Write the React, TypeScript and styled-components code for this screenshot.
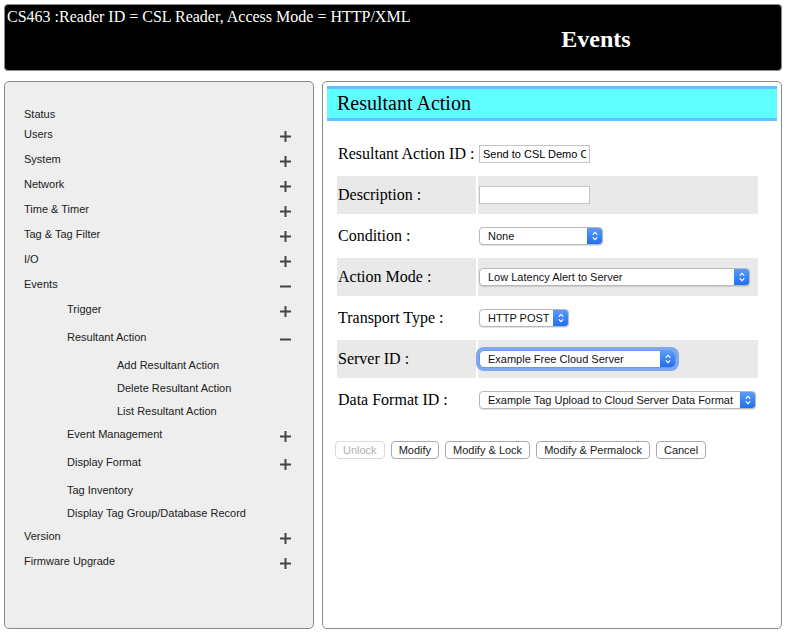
import React from "react";
import styled, { createGlobalStyle, css } from "styled-components";

const GlobalStyle = createGlobalStyle`
  html, body {
    margin: 0;
    padding: 0;
    background: #fff;
  }
  body {
    font-family: "Liberation Serif", "Times New Roman", serif;
  }
`;

const Page = styled.div`
  padding: 4px 3px 4px 4px;
  width: 785px;
  height: 636px;
  box-sizing: border-box;
  display: flex;
  flex-direction: column;
  gap: 10px;
`;

const Header = styled.header`
  height: 67px;
  box-sizing: border-box;
  background: #000;
  color: #fff;
  border: 1px solid #8a8a8a;
  border-radius: 4px;
  padding: 3px 2px 0;
`;

const ReaderInfo = styled.div`
  font-size: 16px;
`;

const PageTitle = styled.h1`
  margin: 0;
  font-size: 24px;
  font-weight: bold;
  text-align: center;
  padding-left: 406px;
`;

const Body = styled.div`
  flex: 1;
  display: flex;
  gap: 8px;
  margin-bottom: 3px;
`;

const Panel = styled.section<{ $grey?: boolean }>`
  box-sizing: border-box;
  border: 1px solid #8a8a8a;
  border-radius: 5px;
  background: ${(p) => (p.$grey ? "#eeeeee" : "#fff")};
`;

const MenuPanel = styled(Panel)`
  width: 310px;
  flex: none;
  padding: 26px 22px 0 19px;
`;

const ContentPanel = styled(Panel)`
  flex: 1;
  padding: 4px;
`;

const MenuList = styled.ul`
  list-style: none;
  margin: 0;
  padding: 0;
  font-family: "Liberation Sans", Arial, sans-serif;
  font-size: 11px;
  color: #222;
`;

const MenuRow = styled.li<{ $level: number; $gap: number }>`
  display: flex;
  justify-content: space-between;
  align-items: flex-start;
  height: 13px;
  line-height: 13px;
  margin-top: ${(p) => p.$gap}px;
  padding-left: ${(p) => (p.$level === 1 ? 0 : p.$level === 2 ? 43 : 93)}px;
`;

const Toggle = styled.svg`
  margin-top: 3px;
  flex: none;
`;

const ToggleIcon = ({ open }: { open: boolean }) => (
  <Toggle width="11" height="11" viewBox="0 0 11 11">
    <rect x="0" y="4.5" width="11" height="2" fill="#444" />
    {!open && <rect x="4.5" y="0" width="2" height="11" fill="#444" />}
  </Toggle>
);

const TitleBar = styled.h2`
  margin: 0;
  height: 35px;
  box-sizing: border-box;
  background: #5fffff;
  border-top: 3px solid #62c2ff;
  border-bottom: 3px solid #62c2ff;
  font-size: 20px;
  font-weight: normal;
  line-height: 29px;
  padding-left: 10px;
`;

const Form = styled.div`
  display: grid;
  grid-template-columns: 139px 280px;
  column-gap: 2px;
  row-gap: 3px;
  margin: 14px 0 0 10px;
`;

const Cell = styled.div<{ $shaded: boolean }>`
  height: 38px;
  display: flex;
  align-items: center;
  padding-left: 1px;
  font-size: 16px;
  background: ${(p) => (p.$shaded ? "#e9e9e9" : "transparent")};
`;

const TextInput = styled.input`
  width: 111px;
  height: 18px;
  box-sizing: border-box;
  border: 1px solid #c4c4c4;
  padding: 0 3px;
  font-family: "Liberation Sans", Arial, sans-serif;
  font-size: 11px;
  color: #000;
  background: #fff;
  outline: none;
`;

const SelectBox = styled.div<{ $w: number; $focus?: boolean }>`
  display: inline-flex;
  width: ${(p) => p.$w}px;
  height: 18px;
  box-sizing: border-box;
  border: 1px solid #b8b8b8;
  border-radius: 4px;
  background: #fff;
  font-family: "Liberation Sans", Arial, sans-serif;
  font-size: 11px;
  color: #111;
  overflow: hidden;
  ${(p) =>
    p.$focus
      ? css`
          box-shadow: 0 0 0 3px #7ea8ef;
          border-color: #6b97e6;
          border-radius: 5px;
        `
      : css`
          box-shadow: 0 1px 1px rgba(0, 0, 0, 0.12);
        `}
`;

const SelectText = styled.span`
  flex: 1;
  padding-left: 8px;
  line-height: 16px;
  white-space: nowrap;
  overflow: hidden;
`;

const Stepper = styled.span`
  width: 15px;
  flex: none;
  display: flex;
  align-items: center;
  justify-content: center;
  background: linear-gradient(#5a9cfb, #1f6ff0);
`;

const Select = ({ value, width, focus }: { value: string; width: number; focus?: boolean }) => (
  <SelectBox $w={width} $focus={focus}>
    <SelectText>{value}</SelectText>
    <Stepper>
      <svg width="8" height="12" viewBox="0 0 8 12">
        <path d="M1.8 4.6 L4 2.4 L6.2 4.6 M1.8 7.4 L4 9.6 L6.2 7.4" fill="none" stroke="#fff" strokeWidth="1.3" />
      </svg>
    </Stepper>
  </SelectBox>
);

const ButtonRow = styled.div`
  display: flex;
  gap: 6px;
  margin: 22px 0 0 8px;
`;

const Button = styled.button`
  height: 18px;
  box-sizing: border-box;
  padding: 0 7px;
  border: 1px solid #a9a9a9;
  border-radius: 4px;
  background: #fff;
  font-family: "Liberation Sans", Arial, sans-serif;
  font-size: 11px;
  color: #222;
  line-height: 16px;

  &:disabled {
    color: #b0b0b0;
    border-color: #dadada;
  }
`;

type MenuItem = { label: string; level: number; gap: number; toggle?: "open" | "closed" };

const menu: MenuItem[] = [
  { label: "Status", level: 1, gap: 0 },
  { label: "Users", level: 1, gap: 7, toggle: "closed" },
  { label: "System", level: 1, gap: 12, toggle: "closed" },
  { label: "Network", level: 1, gap: 12, toggle: "closed" },
  { label: "Time & Timer", level: 1, gap: 12, toggle: "closed" },
  { label: "Tag & Tag Filter", level: 1, gap: 12, toggle: "closed" },
  { label: "I/O", level: 1, gap: 12, toggle: "closed" },
  { label: "Events", level: 1, gap: 12, toggle: "open" },
  { label: "Trigger", level: 2, gap: 12, toggle: "closed" },
  { label: "Resultant Action", level: 2, gap: 15, toggle: "open" },
  { label: "Add Resultant Action", level: 3, gap: 15 },
  { label: "Delete Resultant Action", level: 3, gap: 10 },
  { label: "List Resultant Action", level: 3, gap: 10 },
  { label: "Event Management", level: 2, gap: 10, toggle: "closed" },
  { label: "Display Format", level: 2, gap: 15, toggle: "closed" },
  { label: "Tag Inventory", level: 2, gap: 15 },
  { label: "Display Tag Group/Database Record", level: 2, gap: 10 },
  { label: "Version", level: 1, gap: 10, toggle: "closed" },
  { label: "Firmware Upgrade", level: 1, gap: 12, toggle: "closed" },
];

const fields: { label: string; control: React.ReactNode }[] = [
  { label: "Resultant Action ID :", control: <TextInput readOnly value="Send to CSL Demo Cloud" /> },
  { label: "Description :", control: <TextInput readOnly value="" /> },
  { label: "Condition :", control: <Select value="None" width={124} /> },
  { label: "Action Mode :", control: <Select value="Low Latency Alert to Server" width={271} /> },
  { label: "Transport Type :", control: <Select value="HTTP POST" width={90} /> },
  { label: "Server ID :", control: <Select value="Example Free Cloud Server" width={197} focus /> },
  {
    label: "Data Format ID :",
    control: <Select value="Example Tag Upload to Cloud Server Data Format" width={277} />,
  },
];

export default function App() {
  return (
    <>
      <GlobalStyle />
      <Page>
        <Header>
          <ReaderInfo>CS463 :Reader ID = CSL Reader, Access Mode = HTTP/XML</ReaderInfo>
          <PageTitle>Events</PageTitle>
        </Header>
        <Body>
          <MenuPanel $grey>
            <MenuList>
              {menu.map((item) => (
                <MenuRow key={item.label} $level={item.level} $gap={item.gap}>
                  <span>{item.label}</span>
                  {item.toggle && <ToggleIcon open={item.toggle === "open"} />}
                </MenuRow>
              ))}
            </MenuList>
          </MenuPanel>
          <ContentPanel>
            <TitleBar>Resultant Action</TitleBar>
            <Form>
              {fields.map((f, i) => (
                <React.Fragment key={f.label}>
                  <Cell $shaded={i % 2 === 1}>{f.label}</Cell>
                  <Cell $shaded={i % 2 === 1}>{f.control}</Cell>
                </React.Fragment>
              ))}
            </Form>
            <ButtonRow>
              <Button disabled>Unlock</Button>
              <Button>Modify</Button>
              <Button>Modify &amp; Lock</Button>
              <Button>Modify &amp; Permalock</Button>
              <Button>Cancel</Button>
            </ButtonRow>
          </ContentPanel>
        </Body>
      </Page>
    </>
  );
}
